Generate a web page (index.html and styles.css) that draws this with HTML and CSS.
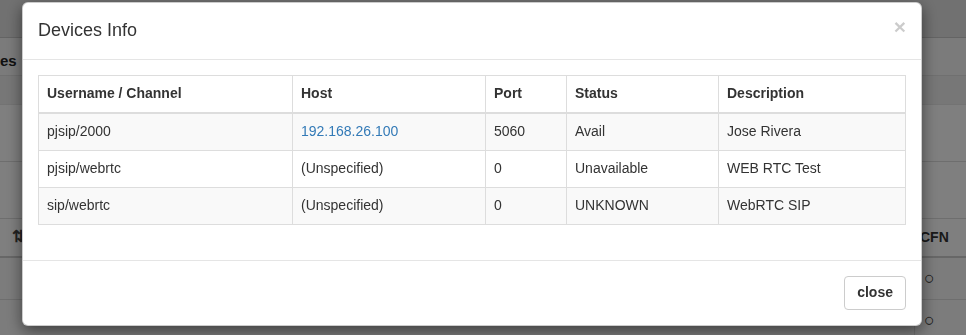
FILE: index.html
```html
<!DOCTYPE html>
<html lang="en">
<head>
  <meta charset="UTF-8" />
  <meta name="viewport" content="width=device-width, initial-scale=1.0" />
  <title>Devices Info</title>
  <link rel="stylesheet" href="styles.css">
</head>
<body>
  <!-- Page behind the modal -->
  <div class="page">
    <div class="topbar"></div>
    <div class="tabs"><span class="tab-label">es</span></div>
    <div class="toolbar"></div>
    <div class="spacer"></div>
    <div class="spacer tall"></div>
    <div class="grid-head">
      <span class="sort-icon">&#8645;</span>
      <span class="grid-col">CFN</span>
    </div>
    <div class="grid-row"><span class="grid-col">&#9675;</span></div>
    <div class="grid-row"><span class="grid-col">&#9675;</span></div>
  </div>

  <!-- Devices modal -->
  <div class="modal-backdrop"></div>
  <div class="modal">
    <div class="modal-dialog">
      <div class="modal-content">
        <div class="modal-header">
          <button type="button" class="modal-close">&times;</button>
          <h4 class="modal-title">Devices Info</h4>
        </div>
        <div class="modal-body">
          <table class="devices-table">
            <thead>
              <tr>
                <th class="col-user">Username / Channel</th>
                <th class="col-host">Host</th>
                <th class="col-port">Port</th>
                <th class="col-status">Status</th>
                <th class="col-desc">Description</th>
              </tr>
            </thead>
            <tbody>
              <tr>
                <td>pjsip/2000</td>
                <td><a href="#">192.168.26.100</a></td>
                <td>5060</td>
                <td>Avail</td>
                <td>Jose Rivera</td>
              </tr>
              <tr>
                <td>pjsip/webrtc</td>
                <td>(Unspecified)</td>
                <td>0</td>
                <td>Unavailable</td>
                <td>WEB RTC Test</td>
              </tr>
              <tr>
                <td>sip/webrtc</td>
                <td>(Unspecified)</td>
                <td>0</td>
                <td>UNKNOWN</td>
                <td>WebRTC SIP</td>
              </tr>
            </tbody>
          </table>
        </div>
        <div class="modal-footer">
          <button type="button" class="btn-close">close</button>
        </div>
      </div>
    </div>
  </div>
</body>
</html>
```

FILE: styles.css
```css
body {
  margin: 0;
  font-family: "Liberation Sans", Arial, sans-serif;
  font-size: 14px;
  line-height: 1.42857;
  color: #333333;
  background-color: #ffffff;
  overflow: hidden;
}

/* Page behind the modal */
.page {
  height: 335px;
}

.topbar {
  height: 37px;
  background-color: #e2e2e2;
  border-bottom: 1px solid #c8c8c8;
}

.tabs {
  height: 38px;
  box-sizing: border-box;
  padding-top: 8px;
  display: flex;
  align-items: center;
  background-color: #f6f6f6;
  border-bottom: 1px solid #e0e0e0;
}

.tab-label {
  font-weight: 700;
  font-size: 15px;
  color: #222222;
}

.toolbar {
  height: 28px;
  background-color: #efefef;
  border-bottom: 1px solid #e6e6e6;
}

.spacer {
  height: 56px;
  border-bottom: 1px solid #dddddd;
}

.spacer.tall {
  height: 56px;
}

.grid-head {
  height: 37px;
  display: flex;
  align-items: center;
  justify-content: space-between;
  border-bottom: 2px solid #cfcfcf;
  font-weight: 700;
}

.sort-icon {
  margin-left: 12px;
  font-size: 16px;
  color: #444444;
}

.grid-col {
  width: 52px;
  padding-left: 5px;
  box-sizing: border-box;
  border-left: 1px solid #dddddd;
  line-height: 37px;
}

.grid-row {
  height: 41px;
  display: flex;
  justify-content: flex-end;
  align-items: center;
  border-bottom: 1px solid #dddddd;
  background-color: #f9f9f9;
}

.grid-row .grid-col {
  padding-left: 9px;
  font-size: 18px;
  line-height: 41px;
}

/* Modal */
.modal-backdrop {
  position: fixed;
  top: 0;
  left: 0;
  width: 100%;
  height: 100%;
  background-color: rgba(0, 0, 0, 0.5);
}

.modal {
  position: fixed;
  top: 0;
  left: 0;
  width: 100%;
  height: 100%;
}

.modal-dialog {
  width: 900px;
  margin: 2px 0 0 22px;
}

.modal-content {
  background-color: #ffffff;
  border: 1px solid rgba(0, 0, 0, 0.2);
  border-radius: 6px;
  box-shadow: 0 5px 15px rgba(0, 0, 0, 0.5);
}

.modal-header {
  padding: 15px;
  border-bottom: 1px solid #e5e5e5;
}

.modal-title {
  margin: 0;
  font-size: 18px;
  font-weight: 400;
  line-height: 1.42857;
}

.modal-close {
  float: right;
  margin-top: -2px;
  padding: 0;
  border: 0;
  background: transparent;
  font-family: "Liberation Sans", Arial, sans-serif;
  font-size: 21px;
  font-weight: 700;
  line-height: 1;
  color: #000000;
  opacity: 0.2;
  cursor: pointer;
}

.modal-body {
  padding: 15px;
}

.devices-table {
  width: 100%;
  margin-bottom: 20px;
  border-collapse: collapse;
  border: 1px solid #dddddd;
}

.devices-table th,
.devices-table td {
  padding: 8px;
  text-align: left;
  border: 1px solid #dddddd;
  line-height: 1.42857;
  vertical-align: top;
}

.devices-table thead th {
  border-bottom-width: 2px;
  font-weight: 700;
}

.devices-table tbody tr:nth-child(odd) {
  background-color: #f9f9f9;
}

.devices-table a {
  color: #337ab7;
  text-decoration: none;
}

.col-user { width: 237px; }
.col-host { width: 176px; }
.col-port { width: 64px; }
.col-status { width: 135px; }

.modal-footer {
  padding: 15px;
  text-align: right;
  border-top: 1px solid #e5e5e5;
}

.btn-close {
  padding: 6px 12px;
  font-family: "Liberation Sans", Arial, sans-serif;
  font-size: 14px;
  font-weight: 700;
  line-height: 1.42857;
  color: #333333;
  background-color: #ffffff;
  border: 1px solid #cccccc;
  border-radius: 4px;
  cursor: pointer;
}
```
